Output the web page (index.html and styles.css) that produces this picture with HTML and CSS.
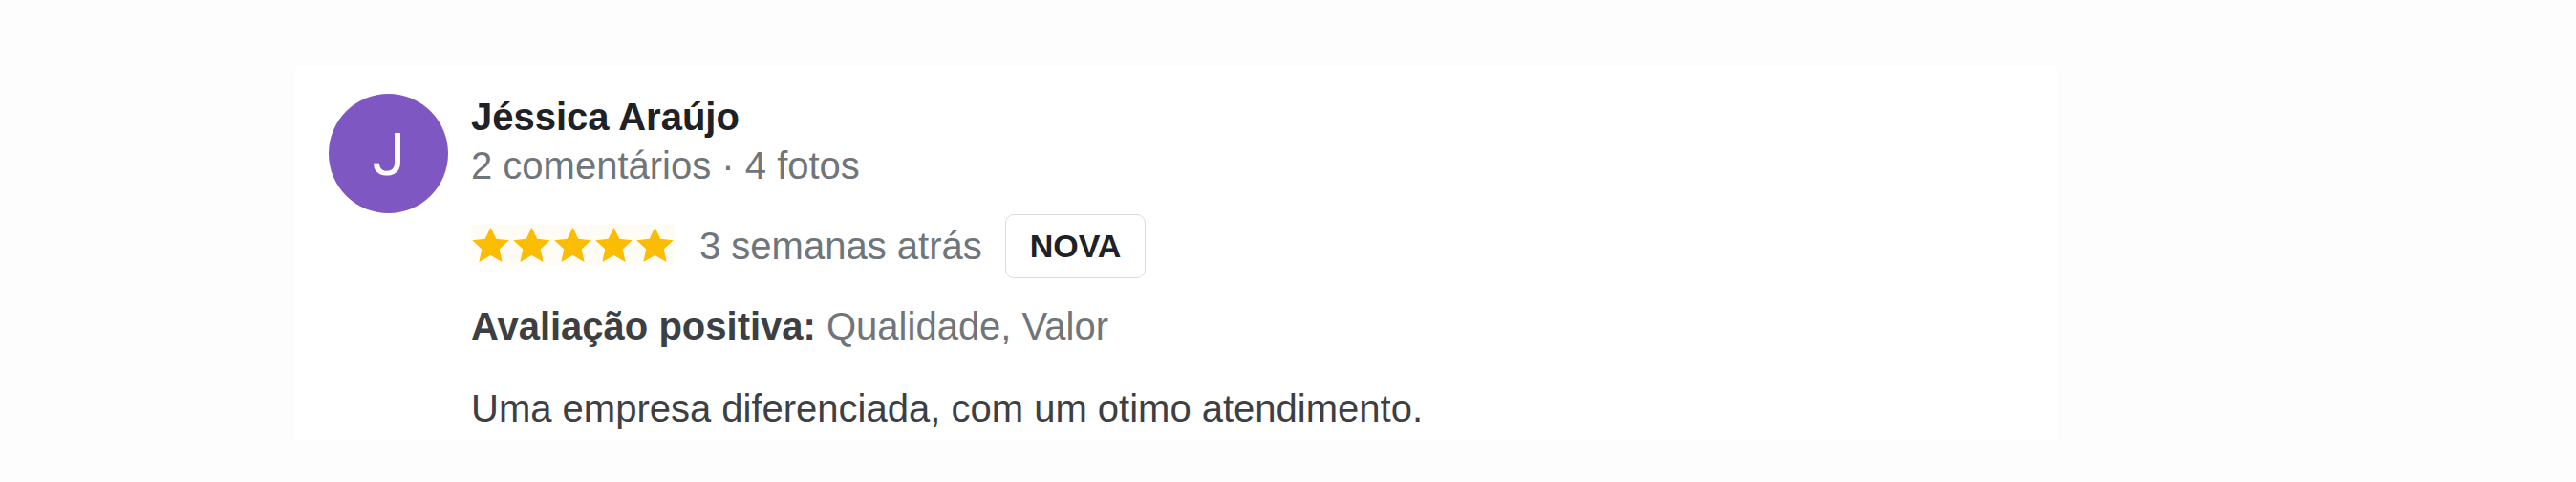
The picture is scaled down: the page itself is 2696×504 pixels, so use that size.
FILE: index.html
```html
<!DOCTYPE html>
<html lang="pt-BR">
<head>
<meta charset="utf-8">
<title>Avaliação</title>
<link rel="stylesheet" href="styles.css">
</head>
<body>
<div class="card">
  <div class="avatar">J</div>
  <div class="content">
    <div class="name">Jéssica Araújo</div>
    <div class="meta">2 comentários · 4 fotos</div>
    <div class="rating-row">
      <div class="stars">
        <svg viewBox="0 0 24 22"><path d="M12 0.3l3.4 7.1 7.9.8-5.9 5.4 1.7 7.9L12 17.5l-7.1 4 1.7-7.9L.7 8.2l7.9-.8z"/></svg>
        <svg viewBox="0 0 24 22"><path d="M12 0.3l3.4 7.1 7.9.8-5.9 5.4 1.7 7.9L12 17.5l-7.1 4 1.7-7.9L.7 8.2l7.9-.8z"/></svg>
        <svg viewBox="0 0 24 22"><path d="M12 0.3l3.4 7.1 7.9.8-5.9 5.4 1.7 7.9L12 17.5l-7.1 4 1.7-7.9L.7 8.2l7.9-.8z"/></svg>
        <svg viewBox="0 0 24 22"><path d="M12 0.3l3.4 7.1 7.9.8-5.9 5.4 1.7 7.9L12 17.5l-7.1 4 1.7-7.9L.7 8.2l7.9-.8z"/></svg>
        <svg viewBox="0 0 24 22"><path d="M12 0.3l3.4 7.1 7.9.8-5.9 5.4 1.7 7.9L12 17.5l-7.1 4 1.7-7.9L.7 8.2l7.9-.8z"/></svg>
      </div>
      <span class="time">3 semanas atrás</span>
      <span class="badge">NOVA</span>
    </div>
    <div class="highlights"><b>Avaliação positiva:</b> Qualidade, Valor</div>
    <div class="text">Uma empresa diferenciada, com um otimo atendimento.</div>
  </div>
</div>
</body>
</html>
```
FILE: styles.css
```css
html, body {
  margin: 0;
  padding: 0;
  background: #fdfdfd;
}
body {
  padding: 69px 0 0 309px;
  font-family: "Liberation Sans", Arial, sans-serif;
}
.card {
  box-sizing: border-box;
  width: 1844px;
  height: 392px;
  background: #ffffff;
  padding: 28px 35px 0 35px;
  display: flex;
  gap: 24px;
}
.avatar {
  flex: none;
  width: 125px;
  height: 125px;
  margin-top: 1px;
  border-radius: 50%;
  background: #7e57c2;
  color: #ffffff;
  font-family: Roboto, "Liberation Sans", sans-serif;
  font-size: 62px;
  line-height: 128px;
  text-align: center;
}
.content {
  display: flex;
  flex-direction: column;
  font-size: 40px;
  line-height: 51px;
}
.name {
  font-weight: bold;
  color: #202124;
}
.meta {
  color: #70757a;
}
.rating-row {
  margin-top: 25px;
  display: flex;
  align-items: center;
  height: 67px;
}
.stars {
  display: flex;
  gap: 2px;
  padding: 2px 0;
  background: #fffcf6;
  margin-top: -4px;
}
.stars svg {
  width: 41px;
  height: 38px;
  fill: #fbbc04;
  display: block;
}
.time {
  margin-left: 26px;
  color: #70757a;
}
.badge {
  margin-left: 24px;
  box-sizing: border-box;
  height: 67px;
  padding: 0 25px;
  border: 1.5px solid #dadce0;
  border-radius: 9px;
  font-size: 34px;
  font-weight: bold;
  color: #202124;
  display: flex;
  align-items: center;
}
.highlights {
  margin-top: 25px;
  color: #70757a;
}
.highlights b {
  color: #3c4043;
}
.text {
  margin-top: 35px;
  color: #3c4043;
}
```
